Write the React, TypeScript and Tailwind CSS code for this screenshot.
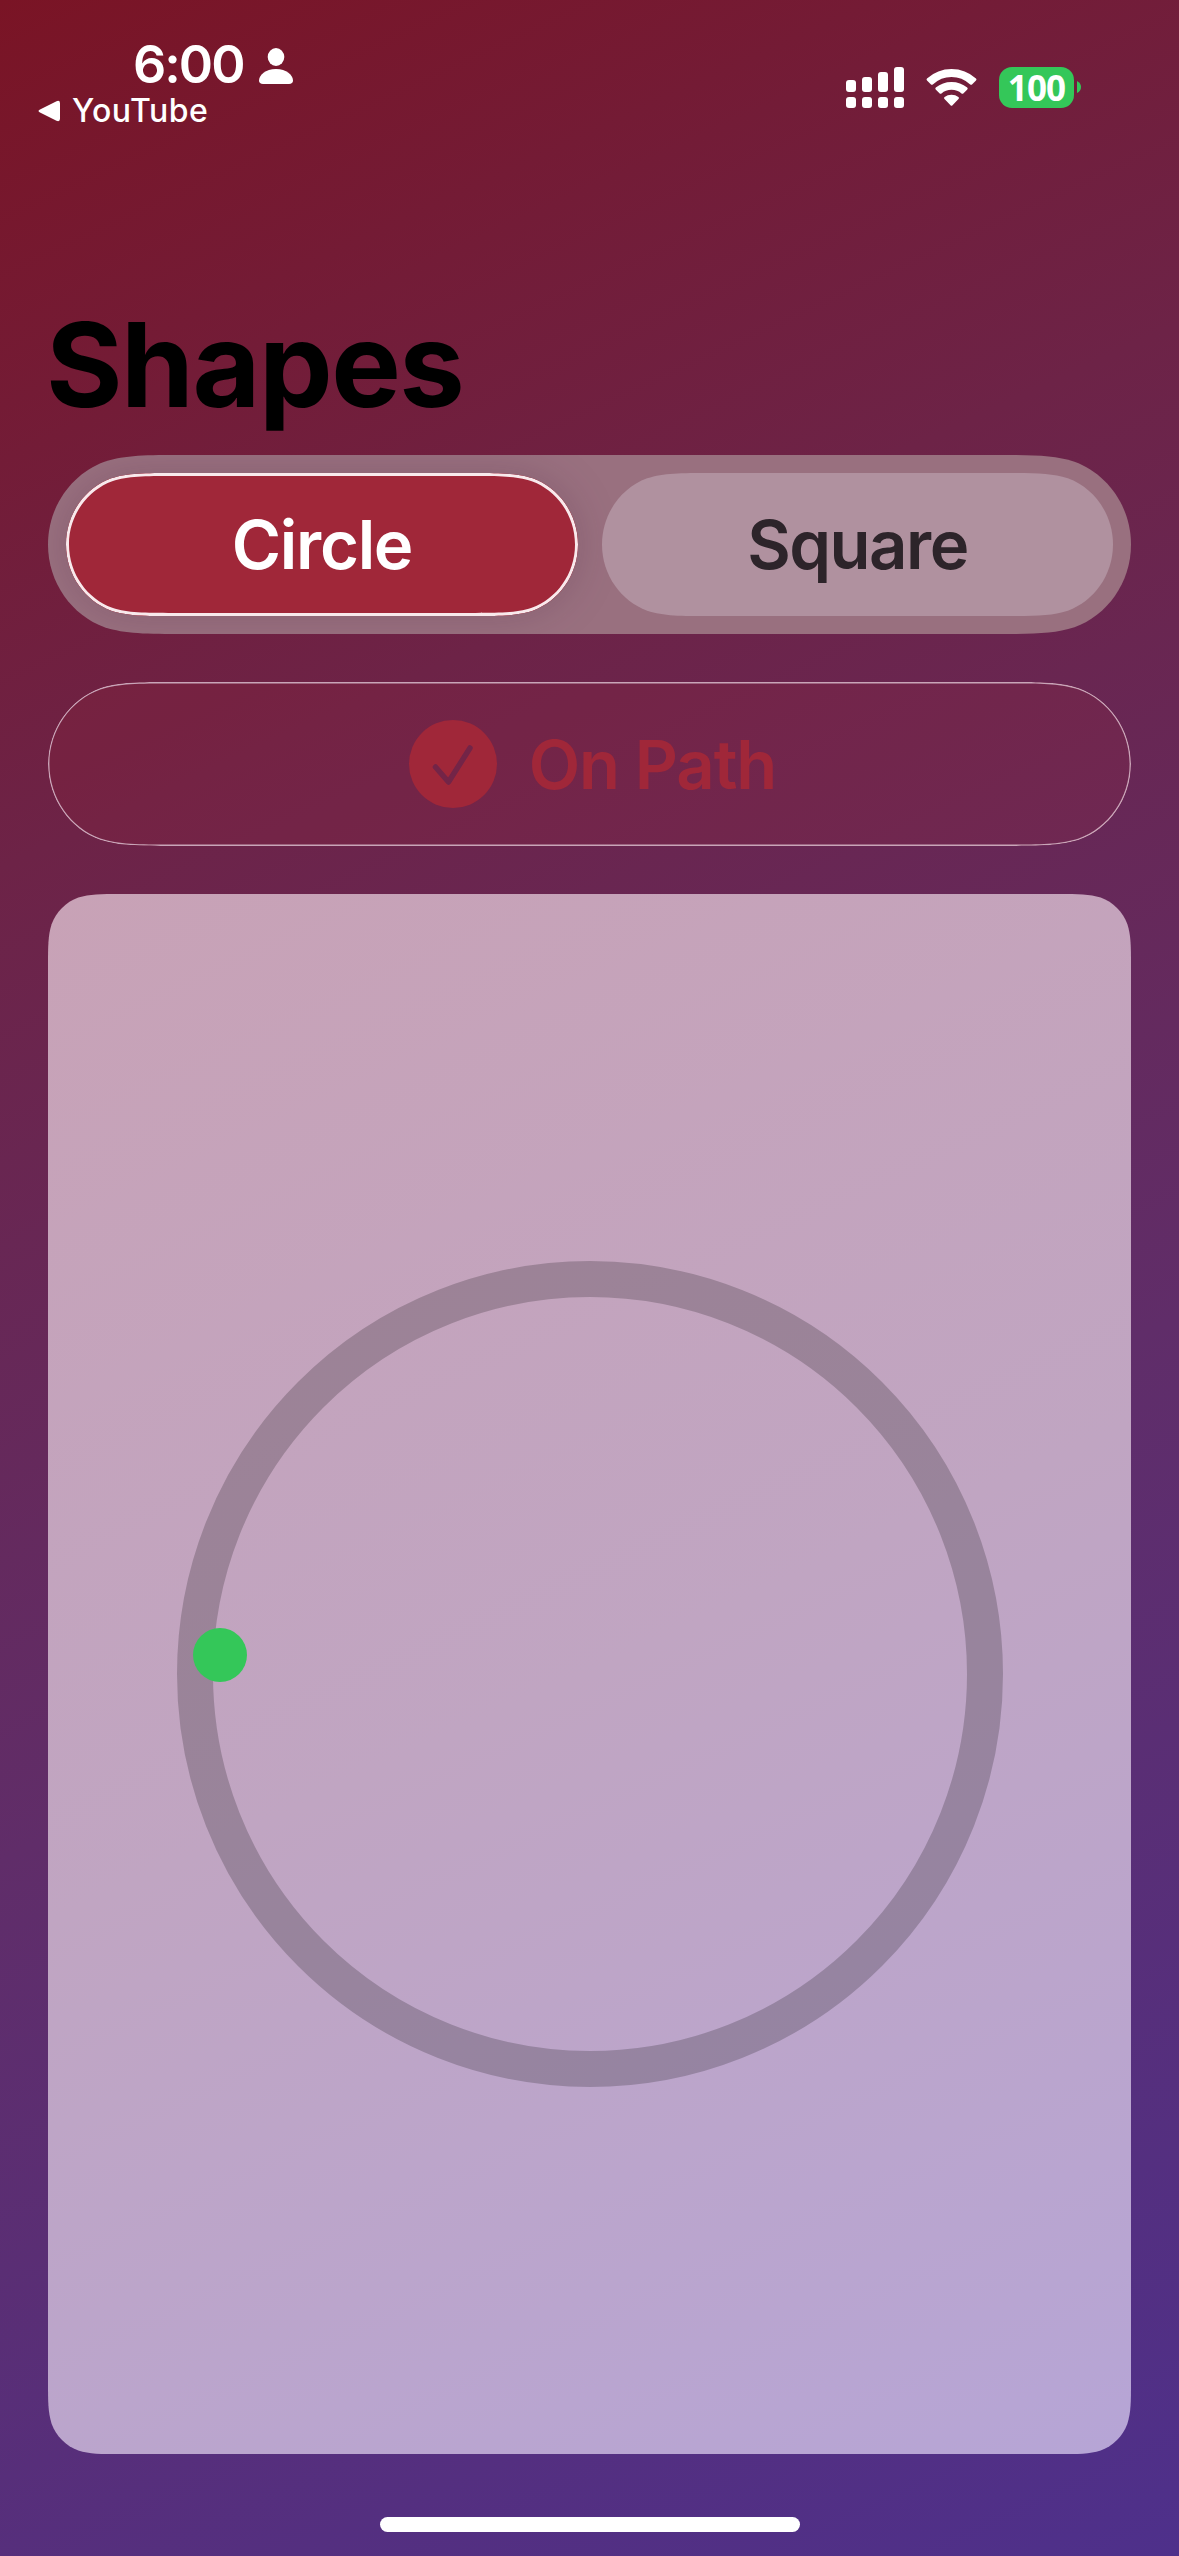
import React, { type ReactNode } from "react";

type Point = [number, number];

/* Corner control points, in multiples of the radius, for a full continuous corner. */
const CARD_CORNER: Point[] = [
  [1.52866, 0], [1.08849, 0], [0.86841, 0], [0.63149, 0.07491],
  [0.37282, 0.16906], [0.16906, 0.37282], [0.07491, 0.63149],
  [0, 0.86841], [0, 1.08849], [0, 1.52866],
];

/* The same corner where the radius is half of the height, so two corners meet. */
const PILL_CORNER: Point[] = [
  [1.52866, 0], [1.08849, 0], [0.86841, 0], [0.63149, 0.07491],
  [0.27, 0.206], [0, 0.57], [0, 1],
];

/* Outline of a rectangle with continuous (squircle) corners. */
function outline(w: number, h: number, r: number, inset = 0): string {
  const R = r - inset;
  const points = r * 2 >= h ? PILL_CORNER : CARD_CORNER;
  const corner = (right: boolean, bottom: boolean, reverse: boolean) => {
    const q = (reverse ? [...points].reverse() : points).map(([x, y]) => {
      const px = right ? w - inset - x * R : inset + x * R;
      const py = bottom ? h - inset - y * R : inset + y * R;
      return `${px.toFixed(2)} ${py.toFixed(2)}`;
    });
    return `${q[0]} C ${q.slice(1).join(" ")}`;
  };
  return `M ${corner(true, false, false)} L ${corner(true, true, true)} L ${corner(false, true, false)} L ${corner(false, false, true)} Z`;
}

const fillClip = (w: number, h: number, r: number) => ({ clipPath: `path("${outline(w, h, r)}")` });
const ringClip = (w: number, h: number, r: number, t: number) => ({
  clipPath: `path(evenodd, "${outline(w, h, r)} ${outline(w, h, r, t)}")`,
});

function StatusBar() {
  return (
    <header className="flex h-[160px] items-start justify-between pr-[98px] pl-[37px] text-white">
      <div className="flex flex-col">
        <div className="mt-[37px] ml-[96px] flex h-[56px] items-center">
          <span className="w-[126px] text-[52px] leading-[56px] font-semibold tracking-[-2px] whitespace-nowrap">6:00</span>
          <svg className="mt-[1px] h-[36px] w-[34px]" viewBox="0 0 34 36" fill="currentColor">
            <ellipse cx="17" cy="9" rx="8.3" ry="9" />
            <path d="M4 36C1.5 36 0 35 0 32.600C0 27 6.500 21 17 21S34 27 34 32.600C34 35 32.500 36 30 36Z" />
          </svg>
        </div>
        <div className="flex h-[36px] items-center">
          <svg className="h-[22px] w-[24px]" viewBox="0 0 24 22" fill="currentColor">
            <path d="M3 9.500L19.500 1.200Q23 0 23 3.200V18.800Q23 22 19.500 20.800L3 12.500Q0 11 3 9.500Z" />
          </svg>
          <span className="ml-[11px] text-[32px] leading-[36px] font-medium tracking-[0.5px]">YouTube</span>
        </div>
      </div>
      <div className="mt-[67px] flex items-start">
        <svg className="h-[41px] w-[58px]" viewBox="0 0 58 41" fill="currentColor">
          <rect x="0" y="13" width="10" height="12" rx="3" />
          <rect x="16" y="10" width="10" height="15" rx="3" />
          <rect x="32" y="5" width="10" height="20" rx="3" />
          <rect x="48" y="0" width="10" height="25" rx="3" />
          <rect x="0" y="30" width="10" height="11" rx="3" />
          <rect x="16" y="30" width="10" height="11" rx="3" />
          <rect x="32" y="30" width="10" height="11" rx="3" />
          <rect x="48" y="30" width="10" height="11" rx="3" />
        </svg>
        <svg className="mt-[2px] ml-[22px] h-[37px] w-[51px]" viewBox="0 0 51 37" fill="currentColor">
          <path d="M1 9.500Q11.500 0 25.500 0T50 9.500Q51 10.500 50 11.500L46 15.500Q45.200 16.200 44.200 15.400Q36 8 25.500 8T6.800 15.400Q5.800 16.200 5 15.500L1 11.500Q0 10.500 1 9.500Z" />
          <path d="M9.800 18.600Q16.500 13 25.500 13T41.200 18.600Q42.200 19.600 41.300 20.600L37.300 24.500Q36.500 25.200 35.500 24.400Q31.500 20.700 25.500 20.700T15.500 24.400Q14.500 25.200 13.700 24.500L9.700 20.600Q8.800 19.600 9.800 18.600Z" />
          <path d="M18.600 28Q21.500 25.700 25.500 25.700T32.400 28Q33.400 29 32.500 29.900L26.500 36.200Q25.500 37.200 24.500 36.200L18.500 29.900Q17.600 29 18.600 28Z" />
        </svg>
        <div className="ml-[22px] flex h-[41px] w-[75px] items-center justify-center rounded-[13px] bg-[#34c759]">
          <span className="font-['Noto_Sans',sans-serif] text-[35px] leading-[41px] font-bold tracking-[-0.8px]">100</span>
        </div>
        <svg className="mt-[14px] ml-[3px] h-[12px] w-[4px]" viewBox="0 0 4 12" fill="#34c759">
          <path d="M0 0Q4 2 4 6T0 12Z" />
        </svg>
      </div>
    </header>
  );
}

function Segment({ selected, children }: { selected?: boolean; children: ReactNode }) {
  if (selected) {
    return (
      <div className="drop-shadow-[0_0_20px_rgba(60,20,50,0.2)]">
        <button className="relative flex h-[143px] w-[512px] items-center justify-center bg-[#a02739] text-white" style={fillClip(512, 143, 71.5)}>
          <span className="text-[67px] leading-none font-semibold tracking-[-1.3px]">{children}</span>
          <span className="absolute inset-0 bg-[#f8e9ec]" style={ringClip(512, 143, 71.5, 3)} />
        </button>
      </div>
    );
  }
  return (
    <button className="flex h-[143px] w-[511px] items-center justify-center bg-[#b0919f] text-[#2d242a]" style={fillClip(511, 143, 71.5)}>
      <span className="text-[67px] leading-none font-semibold tracking-[-1.5px]">{children}</span>
    </button>
  );
}

export default function App() {
  return (
    <div className="flex h-[2556px] w-[1179px] flex-col overflow-hidden bg-[linear-gradient(155.24deg,#7a1425_0%,#6d2347_28%,#602d69_60%,#4e308b_100%)] font-['Inter',sans-serif]">
      <StatusBar />
      <main className="flex flex-col px-[48px]">
        <h1 className="mt-[140px] -ml-[2px] h-[155px] text-[117px] leading-[130px] font-bold tracking-[-1.5px] text-black">Shapes</h1>
        <div className="flex h-[179px] w-[1083px] items-center justify-between bg-[#99707f] px-[18px]" style={fillClip(1083, 179, 89.5)}>
          <Segment selected>Circle</Segment>
          <Segment>Square</Segment>
        </div>
        <button className="relative mt-[48px] flex h-[164px] w-[1083px] items-center justify-center bg-[#a02739]/15 pl-[6px] text-[#a02739]" style={fillClip(1083, 164, 82)}>
          <svg className="h-[88px] w-[88px]" viewBox="0 0 88 88" fill="none">
            <mask id="check">
              <rect width="88" height="88" fill="white" />
              <path d="M26.500 47L39.500 62L61 28" stroke="black" strokeWidth="5.500" strokeLinecap="round" strokeLinejoin="round" />
            </mask>
            <circle cx="44" cy="44" r="44" fill="currentColor" mask="url(#check)" />
          </svg>
          <span className="ml-[32px] text-[67px] leading-none font-semibold tracking-[-1.1px]">On Path</span>
          <span className="absolute inset-0 bg-[#c9a5b8]" style={ringClip(1083, 164, 82, 1.4)} />
        </button>
        <section className="mt-[48px] flex h-[1560px] w-[1083px] items-center justify-center bg-[linear-gradient(155.24deg,#c8a2b6_0%,#c0a5c2_50%,#b6a5d6_100%)]" style={fillClip(1083, 1560, 48)}>
          <div className="relative h-[826px] w-[826px] rounded-full border-[36px] border-black/20">
            <span className="absolute top-[331px] left-[-20px] h-[54px] w-[54px] rounded-full bg-[#34c759]" />
          </div>
        </section>
      </main>
      <div className="mt-[63px] h-[15px] w-[420px] self-center rounded-full bg-white" />
    </div>
  );
}
